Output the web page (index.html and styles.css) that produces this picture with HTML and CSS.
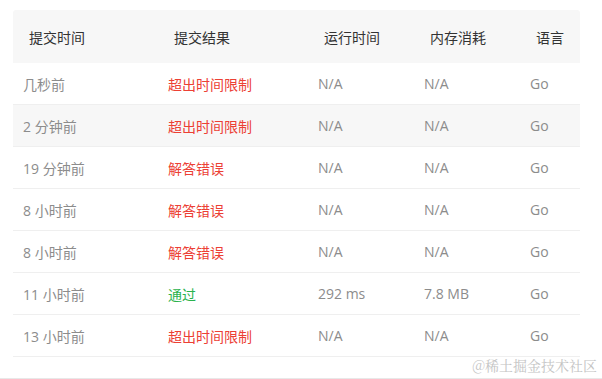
FILE: index.html
```html
<!DOCTYPE html>
<html lang="zh-CN">
<head>
    <meta charset="UTF-8">
    <meta name="viewport" content="width=device-width, initial-scale=1.0">
    <title>提交记录</title>
    <link rel="stylesheet" href="styles.css">
</head>
<body>

    <!-- Submissions -->
    <div class="page">
        <div class="submissions">
            <div class="row head">
                <div>提交时间</div>
                <div>提交结果</div>
                <div>运行时间</div>
                <div>内存消耗</div>
                <div>语言</div>
            </div>
            <div class="row">
                <div>几秒前</div>
                <div class="fail">超出时间限制</div>
                <div>N/A</div>
                <div>N/A</div>
                <div>Go</div>
            </div>
            <div class="row hover">
                <div>2 分钟前</div>
                <div class="fail">超出时间限制</div>
                <div>N/A</div>
                <div>N/A</div>
                <div>Go</div>
            </div>
            <div class="row">
                <div>19 分钟前</div>
                <div class="fail">解答错误</div>
                <div>N/A</div>
                <div>N/A</div>
                <div>Go</div>
            </div>
            <div class="row">
                <div>8 小时前</div>
                <div class="fail">解答错误</div>
                <div>N/A</div>
                <div>N/A</div>
                <div>Go</div>
            </div>
            <div class="row">
                <div>8 小时前</div>
                <div class="fail">解答错误</div>
                <div>N/A</div>
                <div>N/A</div>
                <div>Go</div>
            </div>
            <div class="row">
                <div>11 小时前</div>
                <div class="pass">通过</div>
                <div>292 ms</div>
                <div>7.8 MB</div>
                <div>Go</div>
            </div>
            <div class="row">
                <div>13 小时前</div>
                <div class="fail">超出时间限制</div>
                <div>N/A</div>
                <div>N/A</div>
                <div>Go</div>
            </div>
        </div>

        <!-- Watermark -->
        <span class="watermark">@稀土掘金技术社区</span>
    </div>

</body>
</html>
```

FILE: styles.css
```css
/* Reset */
* {
    margin: 0;
    padding: 0;
    box-sizing: border-box;
}

body {
    background: #fff;
    font-family: 'Open Sans', 'Noto Sans CJK SC', sans-serif;
    font-size: 14px;
    color: #8c8c8c;
}

.page {
    position: relative;
    height: 379px;
    padding: 10px 22px 0 13px;
    border-bottom: 1px solid #e8e8e8;
}

/* Table */
.row {
    display: grid;
    grid-template-columns: 145px 150px 106px 106px 60px;
    align-items: center;
    height: 42px;
    border-bottom: 1px solid #efefef;
}

.row > div {
    padding-left: 10px;
}

.row.head {
    height: 53px;
    background: #f7f7f7;
    border-bottom: none;
    border-radius: 3px 3px 0 0;
    color: #333;
}

.row.head > div {
    padding-left: 16px;
}

.row.hover {
    background: #f7f7f7;
}

.fail {
    color: #ec4034;
}

.pass {
    color: #2bb24c;
}

/* Watermark */
.watermark {
    position: absolute;
    right: 5px;
    bottom: 3px;
    font-family: 'Noto Serif CJK SC', 'Noto Sans CJK SC', serif;
    font-size: 14px;
    color: #c4c4c4;
}
```
